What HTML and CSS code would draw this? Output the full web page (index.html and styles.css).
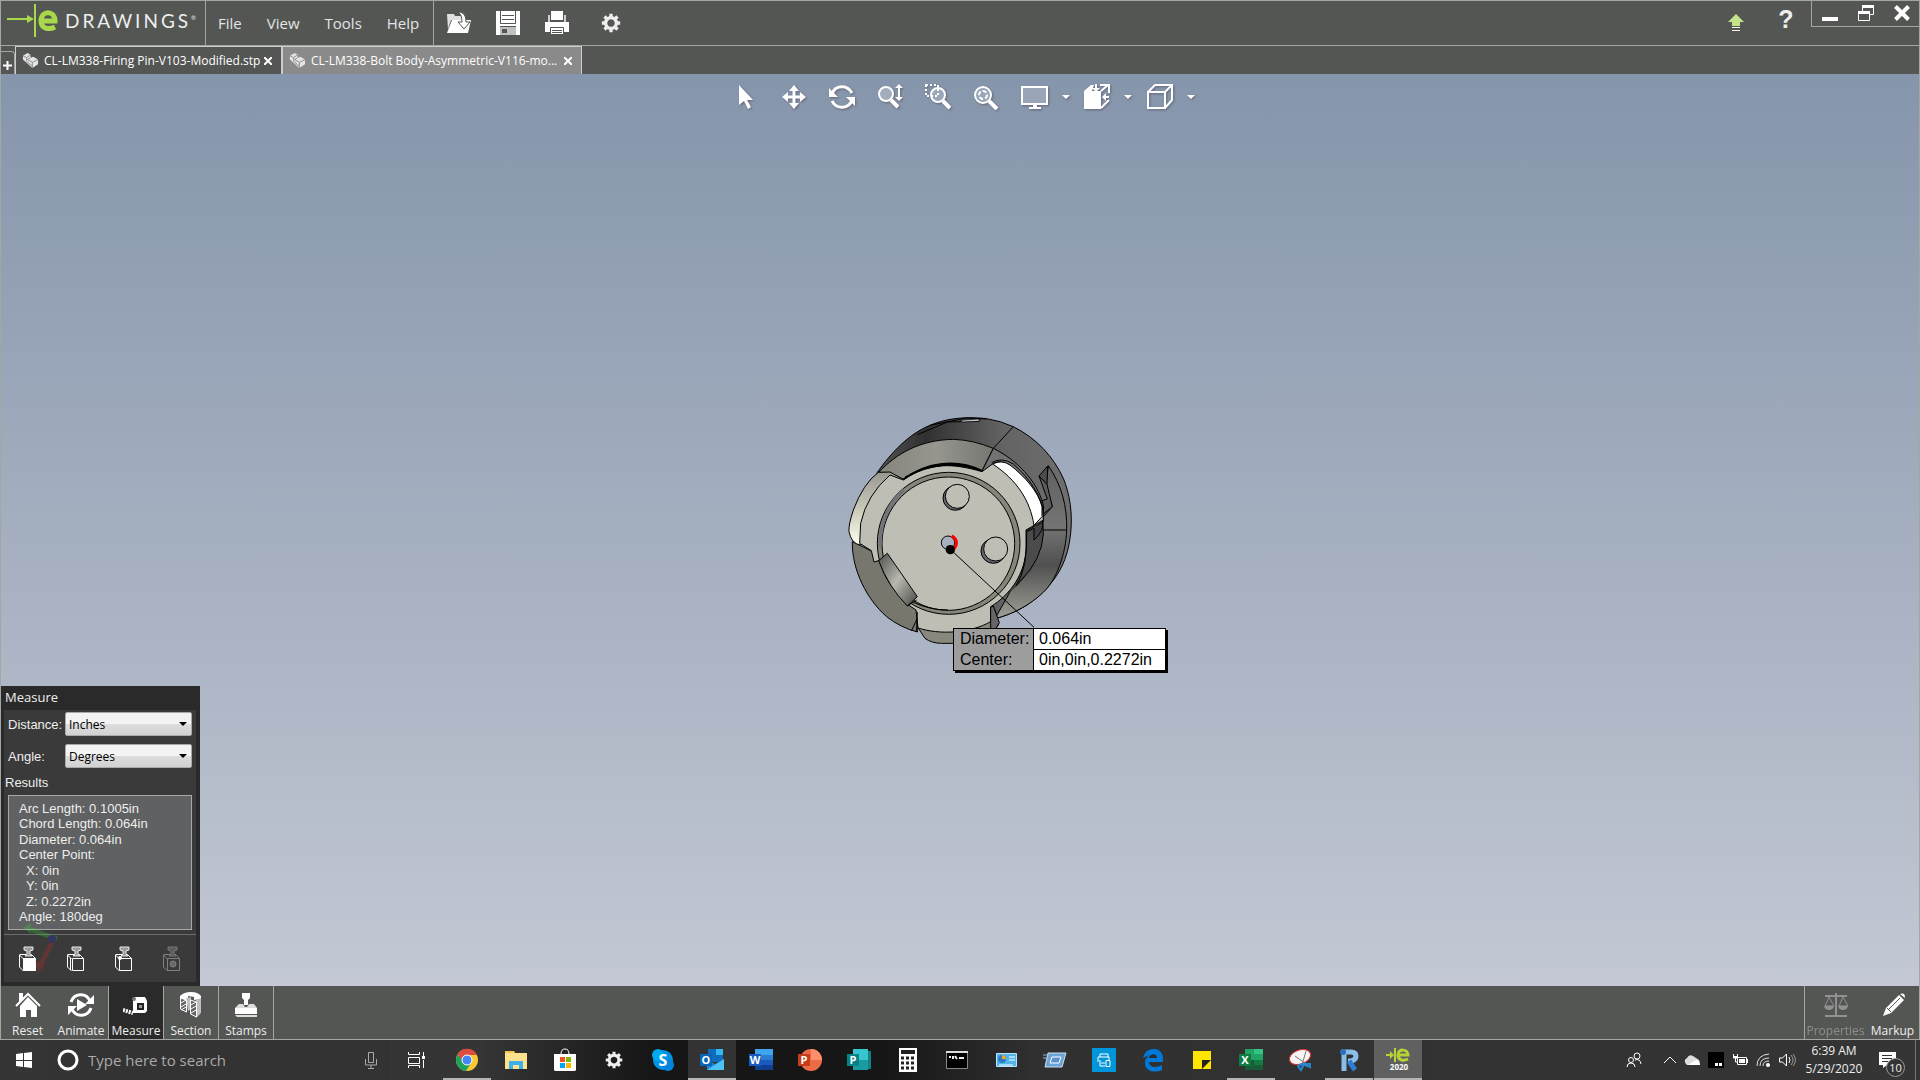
FILE: index.html
```html
<!DOCTYPE html>
<html lang="en">
<head>
    <meta charset="UTF-8">
    <meta name="viewport" content="width=device-width, initial-scale=1.0">
    <title>eDrawings</title>
    <link rel="stylesheet" href="styles.css">
</head>
<body>

    <!-- shared shapes -->
    <svg width="0" height="0" class="defs">
        <symbol id="gear" viewBox="0 0 24 24">
            <path fill="none" stroke="currentColor" stroke-width="4" d="M12 5.500a6.500 6.500 0 1 0 .01 0z"/>
            <path stroke="currentColor" stroke-width="4" d="M12 1v4M12 19v4M1 12h4M19 12h4M4.200 4.200l3 3M16.800 16.800l3 3M19.800 4.200l-3 3M7.200 16.800l-3 3"/>
        </symbol>
        <symbol id="part" viewBox="0 0 18 18">
            <path fill="#e4e4e4" d="M1 4l5-3 3 2v3l3-1 5 3v5l-6 4-10-9z"/>
            <path fill="none" stroke="#8a8a8a" d="M1 4l4 2 4-3M5 6v4l6 5M9 6l-3 2 5 3 6-3M11 11v6"/>
        </symbol>
        <symbol id="stamp-head" viewBox="0 0 20 26">
            <path fill="#9b9b9b" stroke="#e8e8e8" d="M6 1h9v3l-3 1v3l2 2H7l2-2V5L6 4z"/>
        </symbol>
        <symbol id="caret" viewBox="0 0 8 5">
            <path fill="#fff" d="M0 0h8L4 4z"/>
        </symbol>
    </svg>

    <header class="topbar">
        <div class="logo">
            <svg width="58" height="36" viewBox="0 0 58 36">
                <path stroke="#a8d94a" stroke-width="2" d="M6 16h22M34 1v33"/>
                <path fill="#a8d94a" d="M26 12l7 4-7 4z"/>
                <path fill="none" stroke="#a8d94a" stroke-width="5" d="M40 18h14c0-11-14-11-14 0 0 8 8 9 14 6"/>
            </svg>
            <span class="logo-text">DRAWINGS<sup>®</sup></span>
        </div>
        <nav class="menu">
            <a href="#">File</a>
            <a href="#">View</a>
            <a href="#">Tools</a>
            <a href="#">Help</a>
        </nav>
        <div class="file-tools">
            <button aria-label="Open">
                <svg width="26" height="24" viewBox="0 0 26 24">
                    <path fill="#e0e0e0" d="M1 3h7l1 2h8v4H5L2 18z"/>
                    <path fill="#fff" d="M6 9h19l-3 13H1z"/>
                    <path fill="#fff" stroke="#545654" d="M12 1c6 0 8 4 8 10h4l-6 7-6-7h4c0-5-1-8-4-10z"/>
                </svg>
            </button>
            <button aria-label="Save">
                <svg width="24" height="24" viewBox="0 0 24 24">
                    <path fill="#fff" d="M0 0h24v24H0z"/>
                    <path stroke="#545654" stroke-width="1" fill="none" d="M4.500 0v12.500h15V0M6 4.500h12M6 8.500h12"/>
                    <path stroke="#545654" d="M4 15.500h16"/>
                    <path fill="#bfc1c0" d="M4 16h16v8H4z"/>
                    <path fill="#545654" d="M6 18h5v4H6z"/>
                </svg>
            </button>
            <button aria-label="Print">
                <svg width="24" height="24" viewBox="0 0 24 24">
                    <path fill="#fff" d="M6 0h12v9H6zM0 11h24v10H0z"/>
                    <path fill="#d0d0d0" d="M3 4h2v7H3zM19 4h2v7h-2z"/>
                    <path fill="#fff" stroke="#545654" d="M5.500 16.500h13v7h-13zM7 19.500h10M7 21.500h10"/>
                </svg>
            </button>
            <button aria-label="Options" class="options"><svg width="20" height="20"><use href="#gear"/></svg></button>
        </div>
        <div class="top-right">
            <button aria-label="Update">
                <svg width="16" height="18" viewBox="0 0 16 18">
                    <path fill="#c3e48a" d="M8 0l8 8h-4v4H4V8H0z"/>
                    <path stroke="#f3f8e8" stroke-width="1" d="M4 13.500h8M4 16.500h8"/>
                </svg>
            </button>
            <button aria-label="Help" class="help">?</button>
            <div class="window-buttons">
                <button aria-label="Minimize"><svg width="16" height="16" viewBox="0 0 16 16"><path fill="#fff" d="M0 12h16v4H0z"/></svg></button>
                <button aria-label="Restore">
                    <svg width="16" height="16" viewBox="0 0 16 16"><path fill="none" stroke="#fff" d="M4.500 6V.500h11v9H12M.500 6.500h11v9H.500z"/><path fill="#fff" d="M4 0h12v3H4zM0 6h12v3H0z"/></svg>
                </button>
                <button aria-label="Close"><svg width="16" height="16" viewBox="0 0 16 16"><path stroke="#fff" stroke-width="4" d="M1.500 1.500l13 13M14.500 1.500l-13 13"/></svg></button>
            </div>
        </div>
    </header>

    <div class="tabs">
        <button class="tab-add" aria-label="Add tab">
            <svg width="9" height="9" viewBox="0 0 9 9"><path stroke="#fff" stroke-width="2" d="M0 4.500h9M4.500 0v9"/></svg>
        </button>
        <div class="tab">
            <svg width="17" height="17"><use href="#part"/></svg>
            <span>CL-LM338-Firing Pin-V103-Modified.stp</span>
            <button aria-label="Close tab"><svg width="8" height="8" viewBox="0 0 8 8"><path stroke="#fff" stroke-width="2" d="M0 0l8 8M8 0L0 8"/></svg></button>
        </div>
        <div class="tab tab-active">
            <svg width="17" height="17"><use href="#part"/></svg>
            <span>CL-LM338-Bolt Body-Asymmetric-V116-mo...</span>
            <button aria-label="Close tab"><svg width="8" height="8" viewBox="0 0 8 8"><path stroke="#fff" stroke-width="2" d="M0 0l8 8M8 0L0 8"/></svg></button>
        </div>
    </div>

    <main class="viewport">
        <div class="view-tools">
            <button aria-label="Select"><svg width="24" height="26" viewBox="0 0 24 26"><path fill="#fff" d="M5 1l14 15h-6l4 7-3 2-4-8-5 4z"/></svg></button>
            <button aria-label="Pan"><svg width="24" height="24" viewBox="0 0 24 24"><path stroke="#fff" stroke-width="3" d="M12 3v18M3 12h18"/><path fill="#fff" d="M12 0l5 6H7zM12 24l5-6H7zM0 12l6-5v10zM24 12l-6-5v10z"/></svg></button>
            <button aria-label="Rotate">
                <svg width="26" height="26" viewBox="0 0 26 26"><path fill="none" stroke="#fff" stroke-width="3" d="M3 10c3-9 15-10 20-1M23 16c-3 9-15 10-20 1"/><path fill="#fff" d="M0 4v9h9zM26 22v-9h-9z"/></svg>
            </button>
            <button aria-label="Zoom">
                <svg width="26" height="26" viewBox="0 0 26 26"><circle cx="9" cy="10" r="7" fill="#a3aebd" stroke="#fff" stroke-width="2"/><path stroke="#fff" stroke-width="4" d="M14 16l7 7"/><path stroke="#fff" stroke-width="2" d="M22 3v12"/><path fill="#fff" d="M22 0l4 4h-8zM22 17l4-4h-8z"/></svg>
            </button>
            <button aria-label="Zoom to area">
                <svg width="26" height="26" viewBox="0 0 26 26"><circle cx="13" cy="11" r="7" fill="#9aa7b9" stroke="#fff" stroke-width="2"/><path stroke="#fff" stroke-width="4" d="M18 17l7 7"/><path fill="none" stroke="#fff" stroke-width="2" stroke-dasharray="2 2" d="M1 1h12v11H1z"/></svg>
            </button>
            <button aria-label="Zoom to fit">
                <svg width="26" height="26" viewBox="0 0 26 26"><circle cx="10" cy="11" r="8" fill="#9aa7b9" stroke="#fff" stroke-width="2"/><circle cx="10" cy="11" r="4" fill="none" stroke="#fff" stroke-width="2" stroke-dasharray="4 2"/><path stroke="#fff" stroke-width="4" d="M16 17l8 8"/></svg>
            </button>
            <button aria-label="Full screen" class="wide">
                <svg width="28" height="26" viewBox="0 0 28 26"><path fill="#9aa6b8" stroke="#fff" stroke-width="2" d="M2 3h25v17H2z"/><path fill="#fff" d="M13 20h4v3h4v2H9v-2h4z"/></svg>
                <svg class="caret" width="8" height="5"><use href="#caret"/></svg>
            </button>
            <button aria-label="Views" class="wide">
                <svg width="26" height="26" viewBox="0 0 26 26"><path fill="#fff" d="M0 7h17v18H0zM0 7l7-6h3l-2 6z"/><path fill="none" stroke="#fff" stroke-width="2" d="M16 1h9v8M17 7l7-6M25 16l-8 8"/><path fill="#fff" d="M11 0h2v4h3l-4 4-4-4h3zM25 12h-3V9l-4 4 4 4v-3h3z"/></svg>
                <svg class="caret" width="8" height="5"><use href="#caret"/></svg>
            </button>
            <button aria-label="Display style" class="wide">
                <svg width="26" height="26" viewBox="0 0 26 26"><path fill="none" stroke="#fff" stroke-width="2" d="M1 8h17v16H1zM1 8l7-7h17v15l-7 8M18 8l7-7"/></svg>
                <svg class="caret" width="8" height="5"><use href="#caret"/></svg>
            </button>
        </div>

        <!-- bolt body, placed freely on the canvas -->
        <svg class="model" viewBox="0 0 1080 870">
            <defs>
                <linearGradient id="dark" x1="0" x2="1" y1="0" y2="0">
                    <stop offset="0" stop-color="#555"/><stop offset=".25" stop-color="#303030"/><stop offset=".65" stop-color="#636363"/><stop offset="1" stop-color="#6f6f6f"/>
                </linearGradient>
                <linearGradient id="ring" x1="0" x2="0" y1="0" y2="1">
                    <stop offset="0" stop-color="#606060"/><stop offset=".4" stop-color="#747474"/><stop offset=".65" stop-color="#505050"/><stop offset="1" stop-color="#a0a098"/>
                </linearGradient>
                <linearGradient id="lug" x1="0" x2="0" y1="0" y2="1">
                    <stop offset="0" stop-color="#989892"/><stop offset=".5" stop-color="#c9c9b9"/><stop offset="1" stop-color="#fffff0"/>
                </linearGradient>
                <linearGradient id="slot" x1="0" x2="1" y1="0" y2="1">
                    <stop offset="0" stop-color="#505050"/><stop offset=".5" stop-color="#b8b8b0"/><stop offset="1" stop-color="#484844"/>
                </linearGradient>
                <linearGradient id="top" x1="0" x2="1">
                    <stop offset="0" stop-color="#85857c"/><stop offset=".5" stop-color="#96968f"/><stop offset="1" stop-color="#777773"/>
                </linearGradient>
            </defs>
            <g stroke="#000" stroke-width="3" stroke-linejoin="round">
                <path fill="url(#dark)" d="M140 220C185 155 240 100 300 76C350 54 410 49 470 56Q510 62 550 80C620 115 670 170 700 235C720 285 728 340 722 400C714 480 685 530 640 575C600 615 550 642 495 656L400 500z"/>
                <path fill="url(#ring)" d="M655 197C695 255 712 320 710 390C708 460 680 540 640 577C600 615 550 642 495 656L560 540L640 350L667 320L648 255z"/>
                <path fill="#414141" stroke="none" d="M590 400L638 365Q642 430 605 502Q570 560 515 595z"/>
                <path fill="#4c4c4c" d="M627 228l26-30-2 55z"/>
                <path fill="#5c5c5c" d="M627 228l24 25 16 67-27 22-4-40 16-5z"/>
                <path fill="none" d="M640 390h68M550 80L490 145M300 76l110-22 60 3M262 104l90-38 96-2"/>
                <path fill="#c2c8cc" stroke-width="2" d="M392 61l50-4 10 3-8 4-48 2z"/>
                <path fill="url(#top)" d="M146 217C200 160 270 120 370 118Q430 120 490 145L455 215C400 190 300 175 220 238L180 218z"/>
                <path fill="#727272" d="M490 145C560 180 620 240 640 315V365L585 395L500 230L455 215z"/>
                <path fill="#77776d" d="M67 425C65 510 112 600 170 650Q210 682 262 696L260 630L150 485L128 455z"/>
                <path fill="#88887c" d="M265 685l20 30q20 15 50 15h120l50-55-10-45H260z"/>
                <path fill="url(#lug)" d="M145 217Q100 250 70 330Q55 375 57 395Q64 430 90 435L155 310L220 238L180 216z"/>
                <path fill="#bebeb5" d="M180 225Q110 285 92 370L89 430L124 452L132 486L158 478L228 610L258 630L264 684C330 705 420 700 482 665V620C540 585 588 520 588 440V390L640 360L638 320C615 265 570 220 530 192Q508 180 490 190L456 215C370 190 300 185 220 240z"/>
                <path fill="#fff" d="M488 192Q515 178 540 195C585 230 625 275 636 320V350L612 376C600 300 560 240 488 192z"/>
                <path fill="none" d="M485 188Q515 170 550 192C600 235 630 285 640 330"/>
                <path fill="none" stroke-width="5" d="M220 238C290 185 380 175 456 212M226 232C300 190 380 185 448 209"/>
                <ellipse cx="356" cy="430" rx="214" ry="213" fill="#858579"/>
                <ellipse cx="355" cy="431" rx="199" ry="200" fill="#bebeb5"/>
                <path fill="none" stroke="#73737a" stroke-width="10" d="M150 440Q150 330 222 270"/>
                <path fill="url(#slot)" d="M146 482l26-22 90 130-30 28Q175 560 146 482z"/>
                <path fill="none" d="M232 618l28-18M248 606q50 24 106 24M262 636l-2 60M262 655l-18 38"/>
                <path fill="#666" d="M482 622l8-4 18 50-10 18-16 5z"/>
                <path fill="#4b4b4b" d="M590 395l22-10v35q32-28 26-58Q650 440 600 510l-42 48q36-54 32-163z"/>
                <circle cx="376" cy="294" r="37" fill="#65656b"/>
                <circle cx="382" cy="289" r="36" fill="#bebeb5"/>
                <circle cx="490" cy="453" r="37" fill="#65656b"/>
                <circle cx="497" cy="447" r="36" fill="#bebeb5"/>
                <circle cx="354" cy="428" r="20" fill="#a6b0c0"/>
                <path d="M362 449L612 682"/>
            </g>
            <path fill="none" stroke="#f00" stroke-width="9" d="M365 407q24 15 8 39"/>
            <circle cx="361" cy="449" r="14"/>
        </svg>

        <table class="callout">
            <tr><th>Diameter:</th><td>0.064in</td></tr>
            <tr><th>Center:</th><td>0in,0in,0.2272in</td></tr>
        </table>

        <section class="measure">
            <h2>Measure</h2>
            <div class="measure-body">
                <div class="field">
                    <label for="distance">Distance:</label>
                    <span class="select"><select id="distance"><option>Inches</option></select></span>
                </div>
                <div class="field">
                    <label for="angle">Angle:</label>
                    <span class="select"><select id="angle"><option>Degrees</option></select></span>
                </div>
                <h3>Results</h3>
                <ul class="results">
                    <li>Arc Length: 0.1005in</li>
                    <li>Chord Length: 0.064in</li>
                    <li>Diameter: 0.064in</li>
                    <li>Center Point:</li>
                    <li class="coord">X: 0in</li>
                    <li class="coord">Y: 0in</li>
                    <li class="coord">Z: 0.2272in</li>
                    <li>Angle: 180deg</li>
                </ul>
                <div class="measure-tools">
                    <button aria-label="Face">
                        <svg width="20" height="26" viewBox="0 0 20 26"><path fill="none" stroke="#fff" d="M1.500 9v12l4 4M1.500 8.500h12l4 4M1.500 9l4 4"/><path fill="#fff" d="M5 12h13v13H5z"/><use href="#stamp-head" width="20" height="26"/></svg>
                    </button>
                    <button aria-label="Edge">
                        <svg width="20" height="26" viewBox="0 0 20 26"><path fill="none" stroke="#fff" d="M1.500 9v12l4 4M1.500 8.500h12l4 4M1.500 9l4 4M6.500 12.500h11v12h-11zM4.500 12v12"/><use href="#stamp-head" width="20" height="26"/></svg>
                    </button>
                    <button aria-label="Vertex">
                        <svg width="20" height="26" viewBox="0 0 20 26"><path fill="none" stroke="#fff" d="M1.500 9v12l4 4M1.500 8.500h12l4 4M1.500 9l4 4M5.500 12.500h12v12h-12z"/><circle cx="6" cy="12" r="2" fill="#fff"/><use href="#stamp-head" width="20" height="26"/></svg>
                    </button>
                    <button aria-label="Hole" class="off" disabled>
                        <svg width="20" height="26" viewBox="0 0 20 26"><path fill="none" stroke="#fff" d="M1.500 9v12l4 4M1.500 8.500h12l4 4M1.500 9l4 4M5.500 12.500h12v12h-12z"/><circle cx="11" cy="18" r="3" fill="#bbb" stroke="#fff"/><use href="#stamp-head" width="20" height="26"/></svg>
                    </button>
                </div>
            </div>
            <!-- axis triad showing through the panel -->
            <svg class="triad" width="60" height="60" viewBox="0 0 60 60">
                <path stroke="#3f3" stroke-width="5" d="M12 14l30 11"/><path fill="#3f3" d="M8 14l8-5v11z"/>
                <path stroke="#f22" stroke-width="5" d="M38 26L26 50"/><path fill="#f22" d="M20 46l10 5-7 8z"/>
                <circle cx="37" cy="25" r="4" fill="#22f"/>
                <path fill="none" stroke="#44f" d="M33 12h6l-4 6"/>
            </svg>
        </section>
    </main>

    <footer class="bottombar">
        <button>
            <svg width="26" height="26" viewBox="0 0 26 26"><path fill="#fff" d="M4 1h4v5l-4 4zM13 5l9 9v11h-6v-7h-5v7H5V14z"/><path fill="none" stroke="#fff" stroke-width="2" d="M1 14L13 2l12 12"/></svg>
            <span>Reset</span>
        </button>
        <button class="divided">
            <svg width="26" height="26" viewBox="0 0 26 26"><path fill="none" stroke="#fff" stroke-width="3" d="M3 10c3-9 15-10 19-1M23 16c-3 9-15 10-19 1"/><path fill="#fff" d="M26 3v9h-9zM0 23v-9h9zM9 7l10 6-10 6z"/></svg>
            <span>Animate</span>
        </button>
        <button class="divided active">
            <svg width="26" height="26" viewBox="0 0 26 26"><path fill="#fff" d="M10 8l2-3h10l2 4v10l-2 2H10z"/><path fill="#999" stroke="#222" stroke-width="2" d="M15 12h5v5h-5z"/><circle cx="11" cy="7" r="2" fill="#777"/><path stroke="#fff" stroke-width="4" stroke-dasharray="2 1" d="M0 18l10 3"/></svg>
            <span>Measure</span>
        </button>
        <button class="divided">
            <svg width="26" height="26" viewBox="0 0 26 26"><path fill="#fff" d="M2 4q4-4 11-4t10 4v3l-7 1v-3l-6-1v6L2 7z"/><path fill="#bfbfbf" d="M18 8l5-2v15l-5 5zM8 6l5-1v12l-3 2z"/><path fill="#666" stroke="#fff" d="M2.500 6l6 2v12l-6-3zM12.500 8l6 2v15l-6-3z"/><path stroke="#fff" d="M3 11l5-3M3 15l5-3M3 18l5-3M13 13l5-3M13 17l5-3M13 21l5-3"/></svg>
            <span>Section</span>
        </button>
        <button class="divided">
            <svg width="26" height="26" viewBox="0 0 26 26"><path fill="#fff" d="M9 1h8v5l-2 2v5h-4V8L9 6zM2 16h22v6H2z"/><path fill="#ddd" d="M6 12h4l2 3h2l2-3h5l3 4H2zM2 23h22v2H4z"/></svg>
            <span>Stamps</span>
        </button>
        <div class="bottom-right">
            <button class="off" disabled>
                <svg width="26" height="26" viewBox="0 0 26 26"><path fill="none" stroke="#fff" stroke-width="2" d="M2 4h22M13 1v22"/><path fill="none" stroke="#fff" d="M6 5L2 14h9zM20 5l-4 9h9z"/><path fill="#fff" d="M1 14h10q-1 4-5 4t-5-4zM15 14h10q-1 4-5 4t-5-4zM2 23h22v2H2z"/></svg>
                <span>Properties</span>
            </button>
            <button>
                <svg width="26" height="26" viewBox="0 0 26 26"><path fill="#fff" d="M3 24l3-8L19 3l5 5L11 21zM20 2q3-1 4 0t1 4z"/><path stroke="#545654" d="M7 16l4 4M9 17L20 6"/></svg>
                <span>Markup</span>
            </button>
        </div>
    </footer>

    <div class="taskbar">
        <button class="start" aria-label="Start">
            <svg width="16" height="16" viewBox="0 0 16 16"><path fill="#fff" d="M0 2l7-1v7H0zM8 1l8-1v8H8zM0 9h7v6l-7-1zM8 9h8v7l-8-1z"/></svg>
        </button>
        <div class="search">
            <svg width="22" height="22" viewBox="0 0 22 22"><circle cx="11" cy="11" r="9" fill="none" stroke="#fff" stroke-width="3"/></svg>
            <input type="text" placeholder="Type here to search" aria-label="Search">
            <svg width="12" height="18" viewBox="0 0 12 18"><path fill="none" stroke="#aaa" d="M3.500 1.500h5v10h-5zM.500 8v6h11V8M6 14v3M3 17.500h6"/></svg>
        </div>
        <button class="task-view" aria-label="Task View">
            <svg width="17" height="16" viewBox="0 0 17 16"><path fill="none" stroke="#fff" d="M.500 0v2.500h11V0M.500 5.500h11v6H.500zM.500 16v-2.500h11V16M15.500 0v4M15.500 8v8"/><path fill="#fff" d="M14 4h3v3h-3z"/></svg>
        </button>
        <div class="apps">
            <button class="running" aria-label="Chrome"><svg viewBox="0 0 24 24"><circle cx="12" cy="12" r="11" fill="#fbc834"/><path fill="#dc4d40" d="M2.500 6.500A11 11 0 0 1 22 7H12L7.500 14z"/><path fill="#1fa25b" d="M2.500 6.500A11 11 0 0 0 11 23l5-8-7-1z"/><circle cx="12" cy="12" r="5" fill="#4486f4" stroke="#fff"/></svg></button>
            <button aria-label="File Explorer"><svg viewBox="0 0 24 24"><path fill="#f6c94d" d="M1 3h9l2 3H1z"/><path fill="#fee18d" d="M1 5h22v16H1z"/><path fill="#3db0e8" d="M5 13h14v8h-4v-4H9v4H5z"/></svg></button>
            <button aria-label="Store"><svg viewBox="0 0 24 24"><path fill="none" stroke="#fff" d="M8 6q0-5 4-5t4 5"/><path fill="#fff" d="M1 6h22v16q0 1-2 1H3q-2 0-2-1z"/><path fill="#f25022" d="M7 9h5v5H7z"/><path fill="#7fba00" d="M13 9h5v5h-5z"/><path fill="#00a4ef" d="M7 15h5v5H7z"/><path fill="#ffb900" d="M13 15h5v5h-5z"/></svg></button>
            <button aria-label="Settings"><svg class="small"><use href="#gear"/></svg></button>
            <button aria-label="Skype"><svg viewBox="0 0 24 24"><circle cx="12" cy="12" r="10" fill="#0093e6"/><circle cx="7" cy="7" r="6" fill="#00a8ec"/><circle cx="17" cy="17" r="6" fill="#0085dc"/><text class="large" x="12" y="18" text-anchor="middle">S</text></svg></button>
            <button class="running focused" aria-label="Outlook"><svg viewBox="0 0 24 24"><path fill="#0f6cbd" d="M8 1h15v13H8z"/><path fill="#35b8f1" d="M16 1h7v6h-7z"/><path fill="#1c87d8" d="M7 12l8 4 9-5v11H7z"/><path fill="#4cc2f5" d="M7 22l17-11v11z"/><path fill="#0865b5" d="M0 6h12v12H0z"/><text x="6" y="16" text-anchor="middle">O</text></svg></button>
            <button aria-label="Word"><svg viewBox="0 0 24 24"><path fill="#41a5ee" d="M6 1h18v6H6z"/><path fill="#2b7cd3" d="M6 7h18v5H6z"/><path fill="#185abd" d="M6 12h18v5H6z"/><path fill="#103f91" d="M6 17h18v5H6z"/><path fill="#185abd" d="M0 6h12v12H0z"/><text x="6" y="16" text-anchor="middle">W</text></svg></button>
            <button aria-label="PowerPoint"><svg viewBox="0 0 24 24"><circle cx="13" cy="12" r="11" fill="#ed6c47"/><path fill="#ff8f6b" d="M13 1a11 11 0 0 1 11 11H13z"/><path fill="#c43e1c" d="M0 6h12v12H0z"/><text x="6" y="16" text-anchor="middle">P</text></svg></button>
            <button aria-label="Publisher"><svg viewBox="0 0 24 24"><path fill="#0f8387" d="M19 3h5v18h-5z"/><path fill="#37c6d0" d="M6 1h15v11H6z"/><path fill="#1a9ba1" d="M6 12h15v10H6z"/><path fill="#038387" d="M0 6h12v12H0z"/><text x="6" y="16" text-anchor="middle">P</text></svg></button>
            <button aria-label="Calculator"><svg viewBox="0 0 24 24"><path fill="#fff" d="M3 0h18v24H3z"/><path fill="#222" d="M5 2h14v4H5z"/><path stroke="#222" stroke-width="3" stroke-dasharray="3 2" d="M5 10h14M5 15h14M5 20h14"/></svg></button>
            <button aria-label="Command Prompt"><svg viewBox="0 0 24 24"><path stroke="#888" d="M1.500 3.500h21v17h-21z"/><path fill="#ddd" d="M1 3h22v2H1z"/><path stroke="#eee" stroke-width="2" d="M4 9h2M8 8v3M10 8l2 3M14 10h5"/></svg></button>
            <button aria-label="Control Panel"><svg viewBox="0 0 24 24"><path fill="#50b6ea" stroke="#b9e5fa" d="M2.500 5.500h20v13h-20z"/><circle cx="8" cy="11" r="4" fill="#2b7cc4"/><path fill="#f4a62a" d="M8 11V7a4 4 0 0 1 4 4z"/><path stroke="#fff" stroke-width="1" d="M15 9h6M15 12h6M5 17h14"/></svg></button>
            <button aria-label="Run"><svg viewBox="0 0 24 24"><path fill="#6ca4d6" stroke="#cbe2f5" d="M5 5h18l-4 14H2z"/><path fill="#5d93cc" stroke="#fff" d="M9 9h9l-2 6H7z"/><path stroke="#8db8dd" d="M0 7h6M0 10h5"/></svg></button>
            <button aria-label="Printer"><svg viewBox="0 0 24 24"><path fill="#0096d9" d="M0 0h24v24H0z"/><path fill="none" stroke="#fff" d="M8 9V6h8v3M6 14V9h11v3M8 12v6h5M9 15h4M14 12.500h4v6h-4z"/></svg></button>
            <button aria-label="Edge"><svg viewBox="0 0 24 24"><path fill="#0078d7" d="M2 10C4 3 8 1 13 1c6 0 9 5 9 9v4H8c0 6 8 6 13 3v5C12 26 3 22 4 14c0-3 3-6 5-7-3 1-5 2-7 3z"/><path fill="#2a2a2a" d="M8 10h8c0-5-7-5-8 0z"/></svg></button>
            <button aria-label="Sticky Notes"><svg viewBox="0 0 24 24"><path fill="#ffe600" d="M3 3h18v18H3z"/><path fill="#222" d="M12 12h9l-9 9z"/></svg></button>
            <button class="running" aria-label="Excel"><svg viewBox="0 0 24 24"><path fill="#21a366" d="M6 1h18v11H6z"/><path fill="#33c481" d="M15 1h9v5h-9z"/><path fill="#185c37" d="M6 12h18v10H6z"/><path fill="#107c41" d="M0 6h12v12H0zM15 12h9v5h-9z"/><text x="6" y="16" text-anchor="middle">X</text></svg></button>
            <button aria-label="Snipping Tool"><svg viewBox="0 0 24 24"><ellipse cx="12" cy="9" rx="11" ry="7" fill="#f5f5f5" stroke="#d33" transform="rotate(-20 12 9)"/><path stroke="#777" d="M7 8l11 8M18 3l-4 14"/><path fill="none" stroke="#2886cc" stroke-width="2" d="M14 16l-4 2 3 4 3-6 6 0v3z"/></svg></button>
            <button class="running" aria-label="Revit"><svg viewBox="0 0 24 24"><path fill="none" stroke="#8cbce8" stroke-width="5" d="M7 23V4h7q5 0 5 4t-5 5h-3"/><path stroke="#2d7dd2" stroke-width="5" d="M12 13l6 9"/><circle cx="6" cy="4" r="3" fill="#2d6fb7"/></svg></button>
            <button class="running current" aria-label="eDrawings"><svg viewBox="0 0 24 24"><path stroke="#b5d334" stroke-width="2" d="M0 7h7M9 0v14"/><path fill="#b5d334" d="M4 3l4 4-4 4z"/><path fill="none" stroke="#b5d334" stroke-width="3" d="M13 7h9c0-6-10-7-10 0 0 6 6 6 10 4"/><text class="year" x="13" y="22" text-anchor="middle">2020</text></svg></button>
        </div>
        <div class="tray">
            <svg width="16" height="16" viewBox="0 0 16 16"><g fill="none" stroke="#fff"><circle cx="11" cy="4" r="3"/><circle cx="5" cy="8" r="2.500"/><path d="M1 15q0-4 4-4t4 4M9 8q5-2 6 4"/></g></svg>
            <svg class="chevron" width="12" height="8" viewBox="0 0 12 8"><path fill="none" stroke="#fff" d="M0 7l6-6 6 6"/></svg>
            <svg width="16" height="12" viewBox="0 0 16 12"><path fill="#ddd" d="M2 10q-3-4 1-6 2-4 6-2l6 4q2 4-2 5H3z"/><path fill="#fff" d="M4 11l8-5q4 1 4 5z"/></svg>
            <svg width="16" height="16" viewBox="0 0 16 16"><path d="M0 0h16v16H0z"/><path fill="#fff" d="M7 11h3v3H7zM11 11h3v3h-3z"/></svg>
            <svg width="16" height="14" viewBox="0 0 16 14"><path fill="none" stroke="#fff" d="M5.500 4.500h9v7h-9zM1.500 1v4h4V1M3.500 5v4h2"/><path fill="#fff" d="M7 6h6v4H7zM1 3h5v2H1zM15 6h1v4h-1z"/></svg>
            <svg width="14" height="14" viewBox="0 0 14 14"><path fill="none" stroke="#ddd" d="M1 13Q1 2 13 1M4 13q0-8 9-8M7 13q0-5 6-5"/><circle cx="12" cy="12" r="2" fill="#fff"/></svg>
            <svg width="18" height="14" viewBox="0 0 18 14"><path fill="none" stroke="#fff" d="M1.500 5v4h3l4 4V1l-4 4zM11 4q2 3 0 6"/><path fill="none" stroke="#999" d="M13 2q4 5 0 10M15 1q5 6 0 12"/></svg>
            <div class="clock"><span>6:39 AM</span><span>5/29/2020</span></div>
            <button class="notices" aria-label="Notifications">
                <svg width="17" height="16" viewBox="0 0 17 16"><path fill="#fff" d="M0 0h17v13H8l-4 3v-3H0z"/><path stroke="#333" d="M3 3.500h10M3 6.500h10M3 9.500h6"/></svg>
                <span class="badge">10</span>
            </button>
        </div>
        <button class="show-desktop" aria-label="Show desktop"></button>
    </div>

</body>
</html>
```
FILE: styles.css
```css
* {
    box-sizing: border-box;
}

body {
    display: flex;
    flex-direction: column;
    height: 100vh;
    margin: 0;
    overflow: hidden;
    font-family: "Open Sans", "Noto Sans", sans-serif;
    font-size: 12px;
    color: #eee;
    background: #545654;
}

button {
    display: flex;
    align-items: center;
    justify-content: center;
    padding: 0;
    border: none;
    background: none;
    color: inherit;
    font: inherit;
}

h2, h3, ul {
    margin: 0;
    padding: 0;
    font-weight: normal;
    list-style: none;
}

.defs {
    position: absolute;
}

/* top bar */

.topbar {
    display: flex;
    height: 46px;
    border: 1px solid #a4a6a4;
    flex-shrink: 0;
}

.logo {
    display: flex;
    width: 205px;
    gap: 6px;
    align-items: flex-start;
    border-right: 1px solid #a4a6a4;
}

.logo svg {
    margin-top: 2px;
}

.logo-text {
    margin-top: 6px;
    font-family: Lato, sans-serif;
    font-size: 19px;
    line-height: 28px;
    letter-spacing: 3px;
}

.logo-text sup {
    font-size: 6px;
    line-height: 0;
    vertical-align: 8px;
    letter-spacing: 0;
}

.menu {
    display: flex;
    align-items: center;
    width: 228px;
    padding-left: 12px;
    gap: 25px;
    border-right: 1px solid #a4a6a4;
}

.menu a {
    color: #e4e4e4;
    font-size: 15px;
    text-decoration: none;
}

.file-tools {
    display: flex;
    align-items: center;
}

.file-tools button {
    width: 49px;
}

.file-tools .options {
    width: 60px;
}

.top-right {
    display: flex;
    align-items: center;
    margin-left: auto;
}

.top-right > button {
    width: 50px;
}

.top-right .help {
    font-family: "Liberation Sans", sans-serif;
    font-size: 25px;
    font-weight: bold;
    line-height: 36px;
    align-self: flex-start;
}

.window-buttons {
    display: flex;
    align-self: flex-start;
    justify-content: space-between;
    width: 108px;
    height: 26px;
    padding: 0 9px 2px 10px;
    border-left: 1px solid #a4a6a4;
    border-bottom: 1px solid #a4a6a4;
}

/* document tabs */

.tabs {
    display: flex;
    flex-shrink: 0;
    height: 28px;
    border-left: 1px solid #a4a6a4;
    border-right: 1px solid #a4a6a4;
}

.tab-add {
    width: 14px;
    height: 23px;
    align-self: flex-end;
    padding-top: 4px;
    border: 1px solid #a4a6a4;
    border-left: none;
    border-bottom: none;
    border-radius: 0 4px 0 0;
}

.tab {
    display: flex;
    align-items: center;
    width: 267px;
    padding: 0 9px 0 6px;
    border: 1px solid #ccc;
    border-width: 1px 1px 0 1px;
    white-space: nowrap;
    color: #fff;
}

.tab span {
    padding-left: 5px;
}

.tab button {
    margin-left: auto;
}

.tab-active {
    width: 300px;
    background: #8a8a8a;
}

/* canvas */

.viewport {
    position: relative;
    flex: 1;
    border-left: 1px solid #a4a6a4;
    border-right: 1px solid #a4a6a4;
    background: linear-gradient(#8595ab, #c3c8d4);
}

.view-tools {
    display: flex;
    justify-content: center;
    height: 46px;
    filter: drop-shadow(1px 1px 1px #667);
}

.view-tools button {
    width: 48px;
}

.view-tools .wide {
    width: 63px;
    padding-left: 8px;
    gap: 14px;
}

.model {
    position: absolute;
    left: 829px;
    top: 326px;
    width: 360px;
    height: 290px;
}

.callout {
    position: absolute;
    left: 952px;
    top: 554px;
    width: 213px;
    border: 1px solid #000;
    border-collapse: collapse;
    box-shadow: 2px 2px 0 #000;
    font-family: "Liberation Sans", sans-serif;
    font-size: 16px;
    line-height: 20px;
    color: #000;
}

.callout th,
.callout td {
    padding: 0 5px;
    text-align: left;
    font-weight: normal;
}

.callout th {
    width: 80px;
    padding: 0 0 0 6px;
    background: #9d9d9d;
}

.callout td {
    border: 1px solid #000;
    background: #fff;
}

/* measure panel */

.measure {
    position: absolute;
    left: 0;
    bottom: 0;
    width: 199px;
    padding: 0 4px 4px 3px;
    background: #2a2a2a;
}

.measure h2 {
    padding: 0 0 2px 1px;
    font-size: 13px;
    line-height: 22px;
}

.measure-body {
    background: #3a3a3a;
    padding-top: 2px;
}

.field {
    display: flex;
    align-items: center;
    justify-content: space-between;
    height: 24px;
    margin-bottom: 8px;
    padding: 0 4px;
    font-family: "Liberation Sans", sans-serif;
    font-size: 13px;
}

.select {
    position: relative;
    width: 127px;
}

.select::after {
    content: "";
    position: absolute;
    right: 5px;
    top: 10px;
    border: 4px solid transparent;
    border-top-color: #000;
    border-bottom: none;
}

.select select {
    display: block;
    width: 100%;
    height: 24px;
    padding: 0 3px;
    border: 1px solid #aaa;
    border-radius: 2px;
    appearance: none;
    background: linear-gradient(#f3f3f3 50%, #ddd 50%, #d2d2d2);
    color: #000;
    font: 12px "Open Sans", sans-serif;
}

.measure h3 {
    font-family: "Liberation Sans", sans-serif;
    font-size: 13px;
    line-height: 14px;
    padding-left: 1px;
    margin-bottom: 5px;
}

.results {
    display: flex;
    flex-direction: column;
    justify-content: space-between;
    height: 135px;
    margin: 0 4px 4px;
    padding: 5px 10px;
    border: 1px solid #a8a8a8;
    background: #606162;
    font-family: "Liberation Sans", sans-serif;
    font-size: 13px;
    line-height: 15px;
}

.results .coord {
    padding-left: 7px;
}

.measure-tools {
    display: flex;
    height: 48px;
    border-top: 1px solid #6c6e6d;
}

.measure-tools button {
    flex: 1;
}

.off {
    opacity: .35;
}

.triad {
    position: absolute;
    left: 14px;
    bottom: 12px;
    opacity: .2;
}

/* bottom bar */

.bottombar {
    display: flex;
    flex-shrink: 0;
    height: 54px;
    border: 1px solid #a4a6a4;
    border-top: none;
}

.bottombar button {
    flex-direction: column;
    justify-content: space-between;
    width: 53px;
    padding: 6px 0 0;
    line-height: 16px;
}

.bottombar .divided {
    width: 55px;
    border-right: 1px solid #a4a6a4;
}

.bottombar .active {
    background: #2a2a2a;
}

.bottom-right {
    display: flex;
    margin-left: auto;
    border-left: 1px solid #a4a6a4;
}

.bottom-right .off {
    width: 61px;
}

/* windows taskbar */

.taskbar {
    display: flex;
    flex-shrink: 0;
    height: 40px;
    background: linear-gradient(90deg, #353535 25%, #161616 34%, #161616 46%, #303030 54%, #353535);
}

.start {
    width: 48px;
}

.search {
    display: flex;
    align-items: center;
    width: 342px;
    padding: 0 13px 0 9px;
    background: #333;
}

.search input {
    flex: 1;
    min-width: 0;
    padding: 0 0 0 9px;
    border: none;
    background: none;
    font: 15px "Open Sans", sans-serif;
}

.search input::placeholder {
    color: #aaa;
}

.task-view {
    width: 52px;
}

.apps {
    display: flex;
    gap: 1px;
    padding-left: 1px;
}

.apps button {
    width: 48px;
    border-bottom: 2px solid transparent;
    border-top: 2px solid transparent;
}

.apps .running {
    border-bottom-color: #b5b5b5;
}

.apps .focused {
    background: #333;
}

.apps .current {
    background: #606060;
}

.apps svg {
    width: 24px;
    height: 24px;
    overflow: visible;
}

.apps .small {
    width: 18px;
    height: 18px;
}

.apps text {
    fill: #fff;
    font: bold 11px "Open Sans", sans-serif;
}

.apps .large {
    font-size: 16px;
}

.apps .year {
    font-size: 8px;
}

.tray {
    display: flex;
    align-items: center;
    margin-left: auto;
    padding-right: 13px;
    gap: 8px;
}

.tray .chevron {
    margin-left: 14px;
}

.clock {
    display: flex;
    flex-direction: column;
    width: 60px;
    text-align: center;
    line-height: 18px;
}

.notices {
    position: relative;
    width: 30px;
    height: 40px;
}

.badge {
    position: absolute;
    right: -3px;
    bottom: 3px;
    width: 19px;
    height: 19px;
    border: 1px solid #999;
    border-radius: 50%;
    background: #333;
    font-size: 11px;
    line-height: 17px;
    text-align: center;
}

.show-desktop {
    width: 5px;
    border-left: 1px solid #777;
}
```
